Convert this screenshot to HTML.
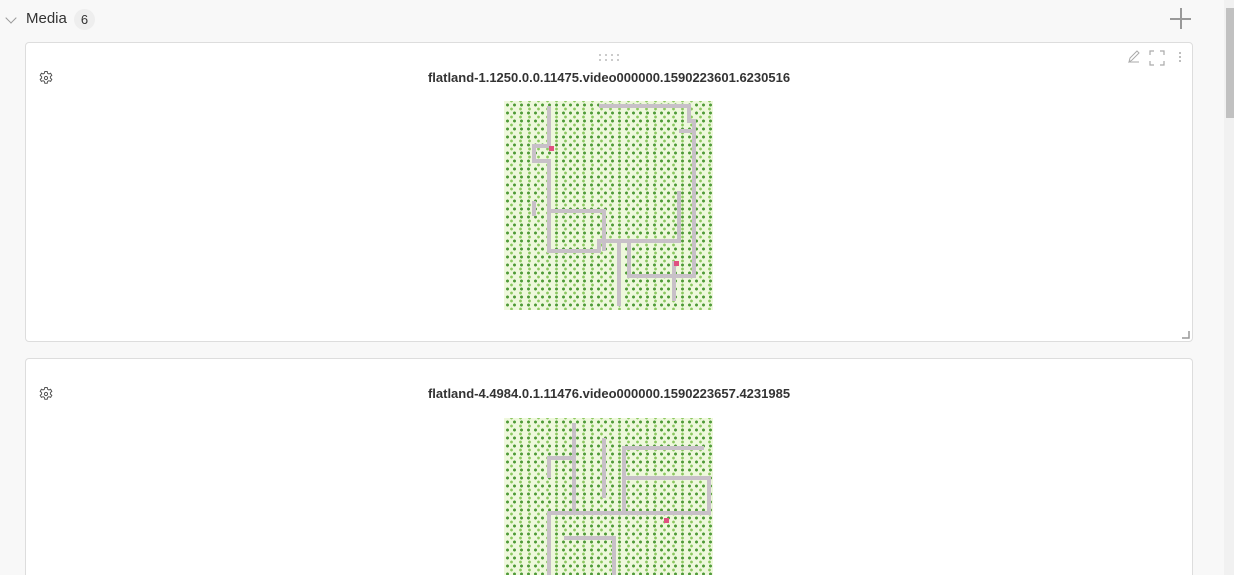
<!DOCTYPE html>
<html style="width:1234px;height:575px;overflow:hidden"><head><meta charset="utf-8">
<style>
*{box-sizing:border-box;margin:0;padding:0}
body{width:1234px;height:575px;overflow:hidden;background:#f8f8f8;font-family:"Liberation Sans",sans-serif;position:relative}
.hdr{position:absolute;left:0;top:0;height:40px;width:1224px}
.chev{position:absolute;left:7px;top:14px;width:8px;height:8px;border-right:1.3px solid #999;border-bottom:1.3px solid #999;transform:rotate(45deg)}
.title{position:absolute;left:26px;top:10px;font-size:15px;color:#333}
.badge{position:absolute;left:74px;top:9px;width:21px;height:21px;border-radius:50%;background:#eee;font-size:13px;color:#333;text-align:center;line-height:21px}
.plus{position:absolute;left:1170px;top:8px;width:21px;height:21px}
.plus:before{content:"";position:absolute;left:10px;top:0;width:1.5px;height:21px;background:#999}
.plus:after{content:"";position:absolute;top:10px;left:0;height:1.5px;width:21px;background:#999}
.panel{position:absolute;left:25px;width:1168px;background:#fff;border:1px solid #ddd;border-radius:4px;overflow:hidden}
.ptitle{position:absolute;left:0;right:0;text-align:center;font-size:13px;font-weight:bold;color:#333}
.gear{position:absolute;left:12px;width:16px;height:16px}
.img{position:absolute;left:478px;width:209px;height:209px;background-color:#eef8dc;
background-image:radial-gradient(circle,#4f9a38 1.3px,transparent 1.7px),radial-gradient(circle,#8cc860 1.2px,transparent 1.6px);
background-size:7px 8px,9px 8px;background-position:0 0,3px 4px;overflow:hidden}
.scroll{position:absolute;left:1224px;top:0;width:10px;height:575px;background:#f1f1f1}
.thumb{position:absolute;left:1226px;top:8px;width:8px;height:110px;background:#c1c1c1}
</style></head><body>
<div class="hdr"><div class="chev"></div><div class="title">Media</div><div class="badge">6</div><div class="plus"></div></div>

<div class="panel" style="top:42px;height:300px">
  <svg style="position:absolute;left:572px;top:10px" width="24" height="10"><g fill="#bbb"><circle cx="2" cy="2" r="1"/><circle cx="8" cy="2" r="1"/><circle cx="14" cy="2" r="1"/><circle cx="20" cy="2" r="1"/><circle cx="2" cy="7" r="1"/><circle cx="8" cy="7" r="1"/><circle cx="14" cy="7" r="1"/><circle cx="20" cy="7" r="1"/></g></svg>
  <svg style="position:absolute;left:1101px;top:7px" width="14" height="14" fill="none" stroke="#aaa" stroke-width="1"><path d="M2 12 L3 8 L10 1 L12 3 L5 10 Z M2 12 H12"/></svg>
  <svg style="position:absolute;left:1123px;top:7px" width="16" height="16" fill="none" stroke="#aaa" stroke-width="1.2"><path d="M1 5V1H5M11 1H15V5M15 11V15H11M5 15H1V11"/></svg>
  <svg style="position:absolute;left:1151px;top:8px" width="6" height="12" fill="#aaa"><circle cx="3" cy="2" r="1"/><circle cx="3" cy="6" r="1"/><circle cx="3" cy="10" r="1"/></svg>
  <svg class="gear" style="top:27px" viewBox="0 0 16 16" fill="none" stroke="#555" stroke-width="1"><path d="M6.8 1.5h2.4l.4 1.8 1.3.7 1.7-.7 1.2 2.1-1.4 1.2v1.5l1.4 1.2-1.2 2.1-1.7-.7-1.3.7-.4 1.8H6.8l-.4-1.8-1.3-.7-1.7.7-1.2-2.1 1.4-1.2V6.6L2.2 5.4l1.2-2.1 1.7.7 1.3-.7z"/><circle cx="8" cy="8" r="1.6"/></svg>
  <div class="ptitle" style="top:27px">flatland-1.1250.0.0.11475.video000000.1590223601.6230516</div>
  <div class="img" style="top:58px">
    <svg width="209" height="209" fill="none" stroke="#c8c0c8" stroke-width="4">
      <path d="M45 5V45H30V60H45V150H95V140H125V175H190V20H185V5H95"/>
      <path d="M45 110H100V150M120 140H175V90M175 30H190M30 100V115"/>
      <path d="M115 140V205M170 160V200"/>
    </svg>
    <div style="position:absolute;left:45px;top:45px;width:5px;height:5px;background:#e05080"></div>
    <div style="position:absolute;left:170px;top:160px;width:5px;height:5px;background:#e05080"></div>
  </div>
  <svg style="position:absolute;left:1156px;top:288px" width="8" height="8"><path d="M7 0V7H0" stroke="#999" stroke-width="1.5" fill="none"/></svg>
</div>

<div class="panel" style="top:358px;height:217px;border-bottom:none;border-radius:4px 4px 0 0">
  <svg class="gear" style="top:27px" viewBox="0 0 16 16" fill="none" stroke="#555" stroke-width="1"><path d="M6.8 1.5h2.4l.4 1.8 1.3.7 1.7-.7 1.2 2.1-1.4 1.2v1.5l1.4 1.2-1.2 2.1-1.7-.7-1.3.7-.4 1.8H6.8l-.4-1.8-1.3-.7-1.7.7-1.2-2.1 1.4-1.2V6.6L2.2 5.4l1.2-2.1 1.7.7 1.3-.7z"/><circle cx="8" cy="8" r="1.6"/></svg>
  <div class="ptitle" style="top:27px">flatland-4.4984.0.1.11476.video000000.1590223657.4231985</div>
  <div class="img" style="top:59px;height:157px">
    <svg width="209" height="157" fill="none" stroke="#c8c0c8" stroke-width="4">
      <path d="M70 5V95H120V60H205V95H120M70 95H45V157M100 20V80M70 40H45V60"/>
      <path d="M120 60V30H200M60 120H110V157"/>
    </svg>
    <div style="position:absolute;left:160px;top:100px;width:5px;height:5px;background:#e05080"></div>
  </div>
</div>

<div class="scroll"></div><div class="thumb"></div>
</body></html>
